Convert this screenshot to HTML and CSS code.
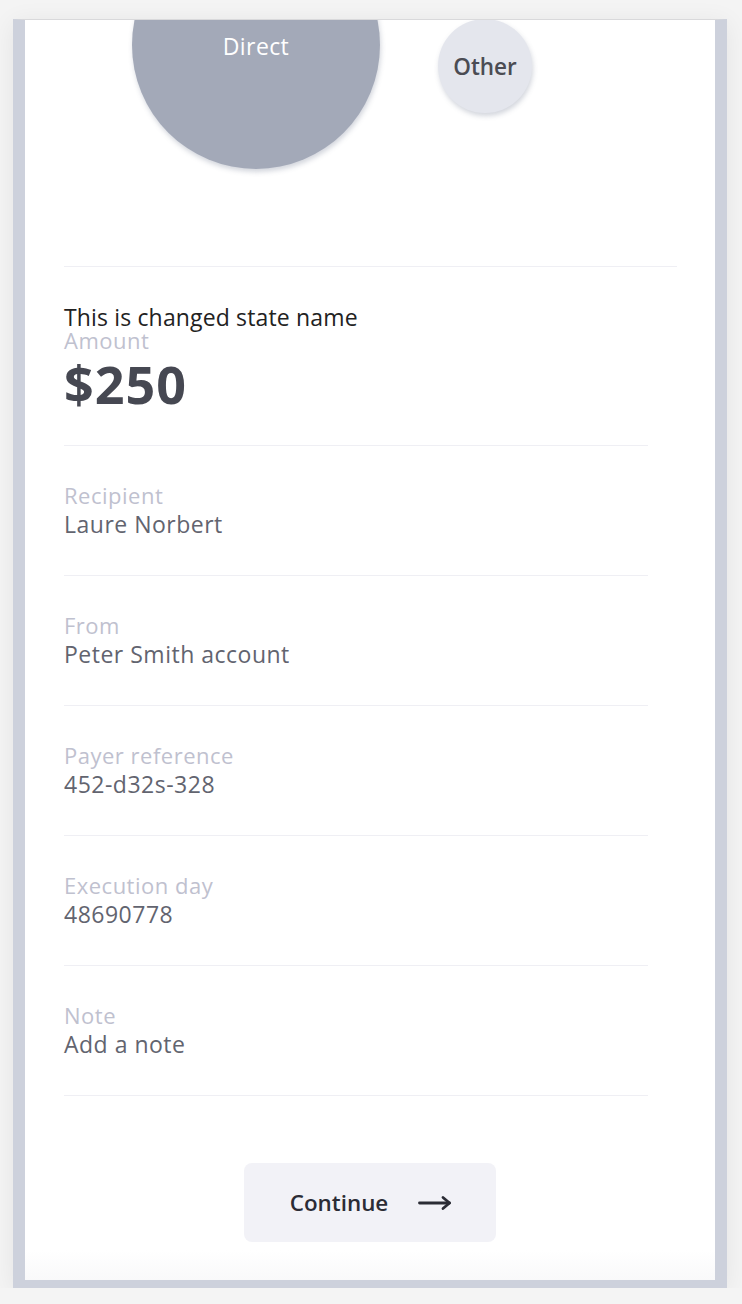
FILE: index.html
```html
<!DOCTYPE html>
<html lang="en">
<head>
    <meta charset="UTF-8">
    <meta name="viewport" content="width=device-width, initial-scale=1.0">
    <title>Payment Summary</title>
    <link rel="stylesheet" href="styles.css">
</head>
<body>
    <div class="device">
        <div class="screen">
            <div class="content">
                <div class="bubbles">
                    <div class="bubble bubble-direct">Direct</div>
                    <div class="bubble bubble-other">Other</div>
                </div>

                <div class="summary">
                    <div class="state-name">This is changed state name</div>
                    <div class="field-label">Amount</div>
                    <div class="amount">$250</div>
                </div>

                <div class="field">
                    <div class="field-label">Recipient</div>
                    <div class="field-value">Laure Norbert</div>
                </div>
                <div class="field">
                    <div class="field-label">From</div>
                    <div class="field-value">Peter Smith account</div>
                </div>
                <div class="field">
                    <div class="field-label">Payer reference</div>
                    <div class="field-value">452-d32s-328</div>
                </div>
                <div class="field">
                    <div class="field-label">Execution day</div>
                    <div class="field-value">48690778</div>
                </div>
                <div class="field">
                    <div class="field-label">Note</div>
                    <div class="field-value">Add a note</div>
                </div>
            </div>

            <div class="actions">
                <button class="continue-btn">
                    Continue
                    <svg width="34" height="20" viewBox="0 0 34 20" fill="none" stroke="#2b2c35" stroke-width="2.8" stroke-linecap="round" stroke-linejoin="round">
                        <path d="M1.5 10h30"/>
                        <path d="M25 4.5l6.5 5.5-6.5 5.5"/>
                    </svg>
                </button>
            </div>
        </div>
    </div>
</body>
</html>
```

FILE: styles.css
```css
body {
    margin: 0;
    background: #f4f4f4;
    font-family: 'Open Sans', 'Noto Sans', sans-serif;
}
.device {
    margin: 19px 0 0 13px;
    width: 690px;
    border-top: 1px solid #d9d9db;
    border-left: 12px solid #cdd1dc;
    border-right: 12px solid #cdd1dc;
    border-bottom: 8px solid #cdd1dc;
    box-shadow: 0 4px 24px rgba(0, 0, 0, 0.07);
}
.screen {
    height: 1260px;
    overflow: hidden;
    background: linear-gradient(to bottom, #fff 0, #fff 1230px, #f9f9fa 1260px);
}
.content {
    padding: 0 38px 0 39px;
}
.bubbles {
    position: relative;
    height: 246px;
    border-bottom: 1px solid #efeff4;
}
.bubble {
    position: absolute;
    display: flex;
    align-items: center;
    justify-content: center;
    border-radius: 50%;
    box-shadow: 1px 3px 5px rgba(80, 90, 120, 0.25);
}
.bubble-direct {
    left: 68px;
    top: -99px;
    width: 248px;
    height: 248px;
    background: #a3a9b8;
    color: #fff;
    font-size: 23px;
    letter-spacing: 0.4px;
    padding-top: 2px;
    box-sizing: border-box;
}
.bubble-other {
    left: 374px;
    top: -1px;
    width: 94px;
    height: 94px;
    background: #e4e6ed;
    color: #4b4c53;
    font-size: 22.5px;
    font-weight: 600;
}
.summary {
    padding: 38px 0 28px;
    margin-right: 29px;
    border-bottom: 1px solid #efeff4;
}
.state-name {
    font-size: 23px;
    letter-spacing: 0.15px;
    line-height: 24px;
    color: #222;
}
.field-label {
    font-size: 22px;
    letter-spacing: 0.5px;
    line-height: 29px;
    color: #bfc1cf;
}
.summary .field-label {
    line-height: 22px;
}
.amount {
    font-size: 52px;
    letter-spacing: 1px;
    line-height: 66px;
    font-weight: 700;
    color: #464852;
}
.field {
    padding: 35px 0 36px;
    margin-right: 29px;
    border-bottom: 1px solid #efeff4;
}
.field-value {
    font-size: 23px;
    letter-spacing: 0.5px;
    line-height: 29px;
    color: #62646f;
}
.actions {
    display: flex;
    justify-content: center;
    padding-top: 67px;
}
.continue-btn {
    display: flex;
    align-items: center;
    justify-content: center;
    gap: 30px;
    width: 252px;
    height: 79px;
    padding: 0 0 0 2px;
    border: none;
    border-radius: 8px;
    background: #f2f2f7;
    font-family: 'Open Sans', 'Noto Sans', sans-serif;
    font-size: 22.4px;
    font-weight: 600;
    color: #2b2c35;
    cursor: pointer;
}
```
